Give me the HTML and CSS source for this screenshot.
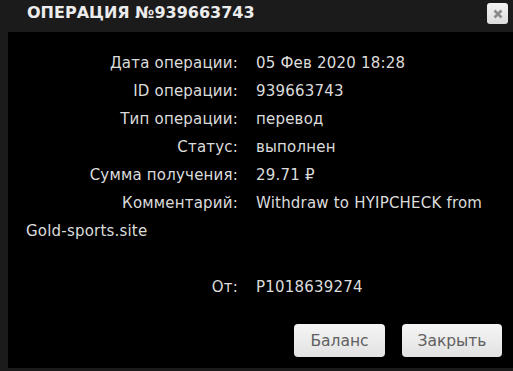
FILE: index.html
```html
<!DOCTYPE html>
<html lang="ru">
<head>
<meta charset="utf-8">
<link rel="stylesheet" href="styles.css">
</head>
<body>
<div class="dialog">
  <div class="titlebar">
    <span class="title">ОПЕРАЦИЯ №939663743</span>
    <span class="close">
      <svg width="12" height="12" viewBox="0 0 12 12"><path d="M2.5 2.5 L9.5 9.5 M9.5 2.5 L2.5 9.5" stroke="#8a8a8a" stroke-width="2.6" stroke-linecap="butt"/></svg>
    </span>
  </div>
  <div class="content">
    <div class="info">
      <div class="row"><span class="label">Дата операции:</span><span class="value">05 Фев 2020 18:28</span></div>
      <div class="row"><span class="label">ID операции:</span><span class="value">939663743</span></div>
      <div class="row"><span class="label">Тип операции:</span><span class="value">перевод</span></div>
      <div class="row"><span class="label">Статус:</span><span class="value">выполнен</span></div>
      <div class="row"><span class="label">Сумма получения:</span><span class="value">29.71 ₽</span></div>
      <div class="row"><span class="label">Комментарий:</span><span class="value">Withdraw to HYIPCHECK from</span> <span class="value">Gold-sports.site</span></div>
      <div class="row empty"></div>
      <div class="row"><span class="label">От:</span><span class="value">P1018639274</span></div>
    </div>
    <div class="actions">
      <button class="btn btn-balance">Баланс</button>
      <button class="btn btn-close">Закрыть</button>
    </div>
  </div>
</div>
</body>
</html>
```
FILE: styles.css
```css
html, body {
  margin: 0;
  padding: 0;
  background: #1b1b1b;
  width: 513px;
  height: 371px;
  overflow: hidden;
}
.dialog {
  display: flex;
  flex-direction: column;
  font-family: "DejaVu Sans", sans-serif;
}
.titlebar {
  height: 32px;
  display: flex;
  align-items: flex-start;
  justify-content: space-between;
  padding-left: 27px;
  padding-right: 5px;
}
.title {
  color: #ececec;
  font-size: 16px;
  font-weight: bold;
  line-height: 26px;
}
.close {
  margin-top: 3px;
  width: 21px;
  height: 21px;
  border-radius: 3px;
  background: linear-gradient(#f4f4f4, #dcdcdc);
  display: flex;
  align-items: center;
  justify-content: center;
}
.content {
  margin-left: 8px;
  background: #000;
  height: 336px;
  box-sizing: border-box;
  padding: 17px 11px 0 18px;
  display: flex;
  flex-direction: column;
}
.info {
  color: #dcdcdc;
  font-size: 15px;
  letter-spacing: 0.2px;
  line-height: 28px;
}
.row.empty {
  height: 28px;
}
.label {
  display: inline-block;
  width: 212px;
  text-align: right;
  margin-right: 18px;
}
.actions {
  display: flex;
  justify-content: flex-end;
  gap: 17px;
  margin-top: 23px;
}
.btn {
  height: 33px;
  border: none;
  border-radius: 4px;
  background: linear-gradient(#f5f5f5, #e2e2e2);
  color: #606060;
  font-family: "DejaVu Sans", sans-serif;
  font-size: 15.5px;
  padding: 0;
}
.btn-balance { width: 91px; }
.btn-close { width: 100px; }
```
